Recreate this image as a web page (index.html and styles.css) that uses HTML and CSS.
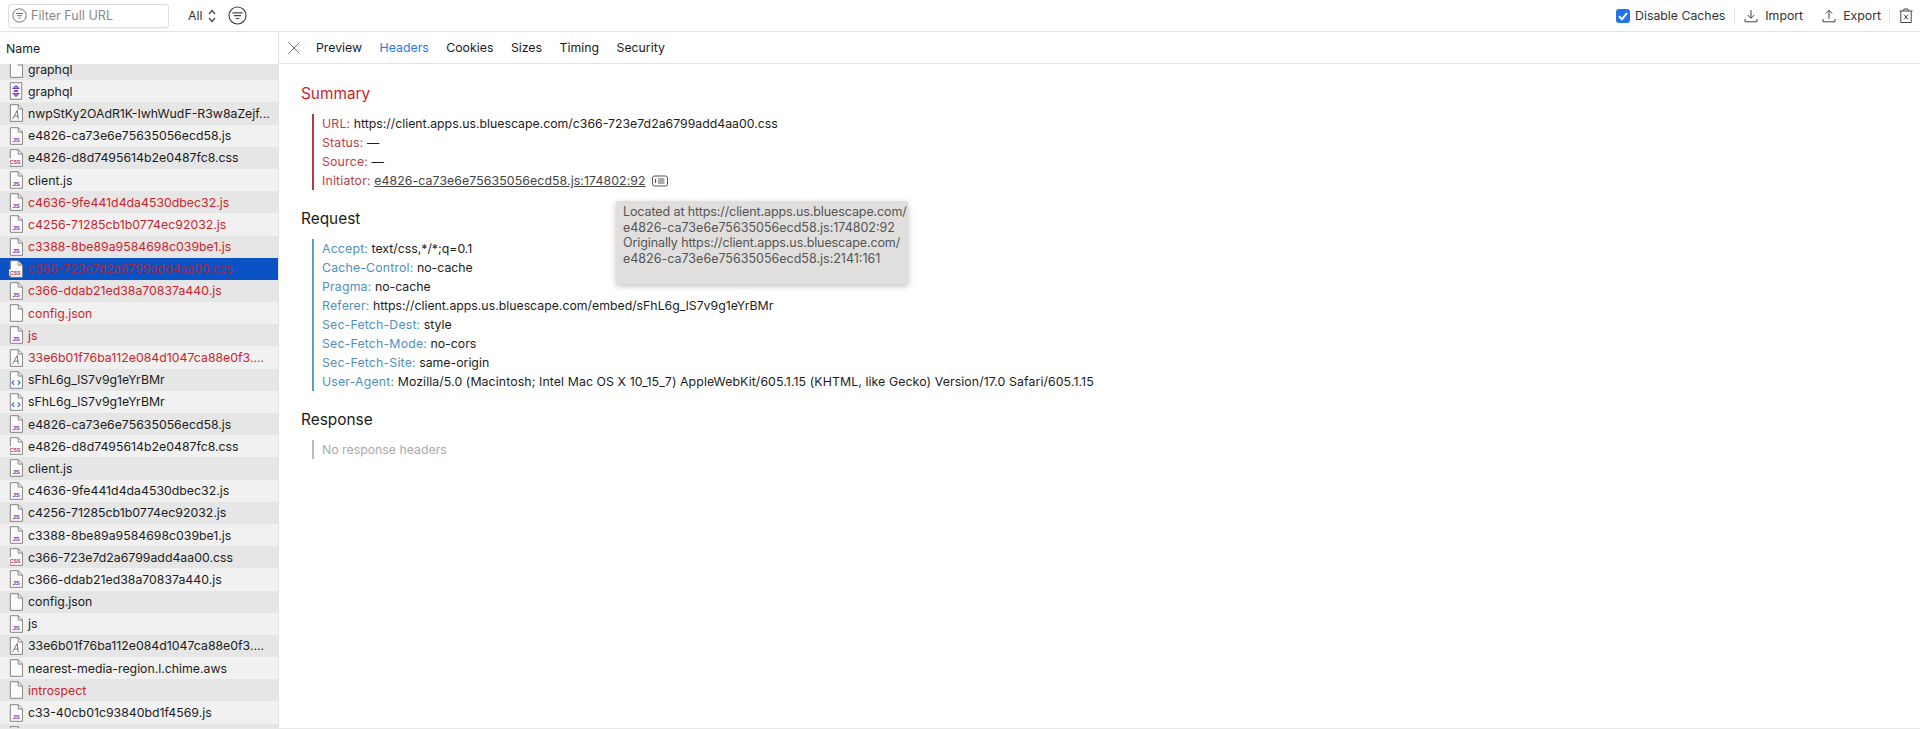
FILE: index.html
```html
<!DOCTYPE html>
<html lang="en">
<head>
<meta charset="utf-8">
<title>Network</title>
<link rel="stylesheet" href="styles.css">
</head>
<body>
<svg class="defs" aria-hidden="true">
  <symbol id="doc" viewBox="0 0 16 20"><path d="M1.5.5h9l5 5v14h-14z" fill="#fbfbfb" stroke="#777"/><path d="M10.5.5v5h5" fill="none" stroke="#777"/></symbol>
  <symbol id="js" viewBox="0 0 16 20"><path d="M1.5.5h9l5 5v14h-14z" fill="#fbfbfb" stroke="#777"/><path d="M10.5.5v5h5" fill="none" stroke="#777"/><text x="8.2" y="16.5" class="gl gl-js">JS</text></symbol>
  <symbol id="css" viewBox="0 0 16 20"><path d="M1.5.5h9l5 5v14h-14z" fill="#fbfbfb" stroke="#777"/><path d="M10.5.5v5h5" fill="none" stroke="#777"/><rect x="0" y="10.5" width="14" height="7" fill="#fbfbfb"/><text x="7" y="16.5" class="gl gl-css">CSS</text></symbol>
  <symbol id="font" viewBox="0 0 16 20"><path d="M1.5.5h9l5 5v14h-14z" fill="#fbfbfb" stroke="#777"/><path d="M10.5.5v5h5" fill="none" stroke="#777"/><path d="M4 17l5.5-10 1 10M6 13.500h4.500" fill="none" stroke="#667" stroke-width="1"/></symbol>
  <symbol id="html" viewBox="0 0 16 20"><path d="M1.500.5h9l5 5v14h-14z" fill="#fbfbfb" stroke="#777"/><path d="M10.5.5v5h5" fill="none" stroke="#777"/><path d="M6 10.500l-2.500 2.500 2.500 2.500M10 10.500l2.500 2.500-2.500 2.500" fill="none" stroke="#2f6fd0" stroke-width="1.300"/></symbol>
  <symbol id="gql" viewBox="0 0 16 20"><path d="M1.500.5h13v19h-13z" fill="#fbfbfb" stroke="#777"/><path d="M8 4l3 3H5zM8 16l3-3H5z" fill="none" stroke="#6a3fd0" stroke-width="1.300"/><path d="M5.500 9h5v2h-5z" fill="#6a3fd0"/></symbol>
</svg>

<header class="toolbar">
  <label class="filter">
    <svg class="filter-ic" width="15" height="15" viewBox="0 0 15 15"><circle cx="7.500" cy="7.500" r="6.700" fill="none" stroke="#777"/><path d="M4 5.500h7M5 7.700h5M6.300 10h2.400" stroke="#777" fill="none"/></svg>
    <span class="filter-text">Filter Full URL</span>
  </label>
  <span class="all">All</span>
  <svg class="updown" width="8" height="14" viewBox="0 0 8 14"><path d="M1 5l3-3.500L7 5M1 9l3 3.500L7 9" fill="none" stroke="#444" stroke-width="1.200"/></svg>
  <svg class="circle-filter" width="19" height="19" viewBox="0 0 19 19"><circle cx="9.500" cy="9.500" r="8.500" fill="none" stroke="#444" stroke-width="1.200"/><path d="M4.500 6.800h10M6 9.700h7M7.700 12.500h3.600" stroke="#444" stroke-width="1.200" fill="none"/></svg>
  <div class="tool-right">
    <span class="check"><svg width="14" height="14" viewBox="0 0 14 14"><path d="M3 7.300l3 3 5-6.300" fill="none" stroke="#fff" stroke-width="2"/></svg></span>
    <span class="tool-label caches">Disable Caches</span>
    <span class="divider"></span>
    <button class="tool-btn import">
      <svg width="14" height="14" viewBox="0 0 14 14"><path d="M7 1v8M3.800 6L7 9.300 10.200 6M1 10v2.800h12V10" fill="none" stroke="#444"/></svg>
      <span class="tool-label">Import</span>
    </button>
    <button class="tool-btn export">
      <svg width="14" height="14" viewBox="0 0 14 14"><path d="M7 10V1.500M3.800 4.500L7 1.200l3.200 3.300M1 10v2.800h12V10" fill="none" stroke="#444"/></svg>
      <span class="tool-label">Export</span>
    </button>
    <span class="divider last"></span>
    <svg class="trash" width="14" height="15" viewBox="0 0 14 15"><path d="M.5 3h13M4.500 3l.5-2h4l.5 2M1.800 3v11.500h10.400V3M5 6.500l4 5M9 6.500l-4 5" fill="none" stroke="#444"/></svg>
  </div>
</header>

<main class="panes">
  <aside class="sidebar">
    <div class="side-head">Name</div>
    <ul class="rows">
      <li class="row"><svg class="ic"><use href="#doc"/></svg><span class="nm">graphql</span></li>
      <li class="row"><svg class="ic"><use href="#gql"/></svg><span class="nm">graphql</span></li>
      <li class="row"><svg class="ic"><use href="#font"/></svg><span class="nm">nwpStKy2OAdR1K-IwhWudF-R3w8aZejf...</span></li>
      <li class="row"><svg class="ic"><use href="#js"/></svg><span class="nm">e4826-ca73e6e75635056ecd58.js</span></li>
      <li class="row"><svg class="ic"><use href="#css"/></svg><span class="nm">e4826-d8d7495614b2e0487fc8.css</span></li>
      <li class="row"><svg class="ic"><use href="#js"/></svg><span class="nm">client.js</span></li>
      <li class="row err"><svg class="ic"><use href="#js"/></svg><span class="nm">c4636-9fe441d4da4530dbec32.js</span></li>
      <li class="row err"><svg class="ic"><use href="#js"/></svg><span class="nm">c4256-71285cb1b0774ec92032.js</span></li>
      <li class="row err"><svg class="ic"><use href="#js"/></svg><span class="nm">c3388-8be89a9584698c039be1.js</span></li>
      <li class="row err sel"><svg class="ic"><use href="#css"/></svg><span class="nm">c366-723e7d2a6799add4aa00.css</span></li>
      <li class="row err"><svg class="ic"><use href="#js"/></svg><span class="nm">c366-ddab21ed38a70837a440.js</span></li>
      <li class="row err"><svg class="ic"><use href="#doc"/></svg><span class="nm">config.json</span></li>
      <li class="row err"><svg class="ic"><use href="#js"/></svg><span class="nm">js</span></li>
      <li class="row err"><svg class="ic"><use href="#font"/></svg><span class="nm">33e6b01f76ba112e084d1047ca88e0f3....</span></li>
      <li class="row"><svg class="ic"><use href="#html"/></svg><span class="nm">sFhL6g_lS7v9g1eYrBMr</span></li>
      <li class="row"><svg class="ic"><use href="#html"/></svg><span class="nm">sFhL6g_lS7v9g1eYrBMr</span></li>
      <li class="row"><svg class="ic"><use href="#js"/></svg><span class="nm">e4826-ca73e6e75635056ecd58.js</span></li>
      <li class="row"><svg class="ic"><use href="#css"/></svg><span class="nm">e4826-d8d7495614b2e0487fc8.css</span></li>
      <li class="row"><svg class="ic"><use href="#js"/></svg><span class="nm">client.js</span></li>
      <li class="row"><svg class="ic"><use href="#js"/></svg><span class="nm">c4636-9fe441d4da4530dbec32.js</span></li>
      <li class="row"><svg class="ic"><use href="#js"/></svg><span class="nm">c4256-71285cb1b0774ec92032.js</span></li>
      <li class="row"><svg class="ic"><use href="#js"/></svg><span class="nm">c3388-8be89a9584698c039be1.js</span></li>
      <li class="row"><svg class="ic"><use href="#css"/></svg><span class="nm">c366-723e7d2a6799add4aa00.css</span></li>
      <li class="row"><svg class="ic"><use href="#js"/></svg><span class="nm">c366-ddab21ed38a70837a440.js</span></li>
      <li class="row"><svg class="ic"><use href="#doc"/></svg><span class="nm">config.json</span></li>
      <li class="row"><svg class="ic"><use href="#js"/></svg><span class="nm">js</span></li>
      <li class="row"><svg class="ic"><use href="#font"/></svg><span class="nm">33e6b01f76ba112e084d1047ca88e0f3....</span></li>
      <li class="row"><svg class="ic"><use href="#doc"/></svg><span class="nm">nearest-media-region.l.chime.aws</span></li>
      <li class="row err"><svg class="ic"><use href="#doc"/></svg><span class="nm">introspect</span></li>
      <li class="row"><svg class="ic"><use href="#js"/></svg><span class="nm">c33-40cb01c93840bd1f4569.js</span></li>
      <li class="row"><svg class="ic"><use href="#doc"/></svg></li>
    </ul>
  </aside>

  <section class="detail">
    <nav class="tabs">
      <svg class="close" width="12" height="12" viewBox="0 0 12 12"><path d="M.5.500l11 11M11.500.5l-11 11" stroke="#777" fill="none"/></svg>
      <span class="tab">Preview</span>
      <span class="tab active">Headers</span>
      <span class="tab">Cookies</span>
      <span class="tab">Sizes</span>
      <span class="tab">Timing</span>
      <span class="tab">Security</span>
    </nav>
    <div class="content">
      <h2 class="sec-title red">Summary</h2>
      <dl class="group g-red">
        <div class="kv"><dt>URL:</dt> <dd>https://client.apps.us.bluescape.com/c366-723e7d2a6799add4aa00.css</dd></div>
        <div class="kv"><dt>Status:</dt> <dd>—</dd></div>
        <div class="kv"><dt>Source:</dt> <dd>—</dd></div>
        <div class="kv"><dt>Initiator:</dt> <dd><u class="link">e4826-ca73e6e75635056ecd58.js:174802:92</u>
          <svg class="stack" width="16" height="12" viewBox="0 0 16 12"><rect x=".5" y="1" width="15" height="10" rx="2" fill="none" stroke="#555"/><path d="M3.500 4v4" stroke="#555" stroke-width="1.300"/><path d="M6 4h6.500M6 6h6.500M6 8h6.500" stroke="#555"/></svg></dd></div>
      </dl>
      <h2 class="sec-title">Request</h2>
      <dl class="group g-blue">
        <div class="kv"><dt>Accept:</dt> <dd>text/css,*/*;q=0.1</dd></div>
        <div class="kv"><dt>Cache-Control:</dt> <dd>no-cache</dd></div>
        <div class="kv"><dt>Pragma:</dt> <dd>no-cache</dd></div>
        <div class="kv"><dt>Referer:</dt> <dd>https://client.apps.us.bluescape.com/embed/sFhL6g_lS7v9g1eYrBMr</dd></div>
        <div class="kv"><dt>Sec-Fetch-Dest:</dt> <dd>style</dd></div>
        <div class="kv"><dt>Sec-Fetch-Mode:</dt> <dd>no-cors</dd></div>
        <div class="kv"><dt>Sec-Fetch-Site:</dt> <dd>same-origin</dd></div>
        <div class="kv"><dt>User-Agent:</dt> <dd class="ua">Mozilla/5.0 (Macintosh; Intel Mac OS X 10_15_7) AppleWebKit/605.1.15 (KHTML, like Gecko) Version/17.0 Safari/605.1.15</dd></div>
      </dl>
      <h2 class="sec-title">Response</h2>
      <div class="group g-gray"><div class="kv none">No response headers</div></div>
      <div class="tooltip"><span class="tt-url">Located at https://client.apps.us.bluescape.com/</span><br>e4826-ca73e6e75635056ecd58.js:174802:92<br><span class="tt-url">Originally https://client.apps.us.bluescape.com/</span><br>e4826-ca73e6e75635056ecd58.js:2141:161</div>
    </div>
  </section>
</main>
</body>
</html>
```
FILE: styles.css
```css
* { box-sizing: border-box; }
html, body { margin: 0; }
html { overflow: hidden; }
body {
  height: 729px;
  overflow: hidden;
  display: flex;
  flex-direction: column;
  font-family: Inter, "Liberation Sans", sans-serif;
  font-size: 12.3px;
  color: #1c1c1c;
  background: #fff;
}
.defs { display: none; }
.gl { font-family: "Liberation Sans", sans-serif; font-weight: 700; text-anchor: middle; }
.gl-js { font-size: 7px; fill: #5a3fc0; }
.gl-css { font-size: 6px; fill: #b33a3a; }

.toolbar {
  height: 32px;
  flex: none;
  display: flex;
  align-items: center;
  padding: 0 7px 0 8px;
  border-bottom: 1px solid #e2e2e2;
}
.filter {
  width: 161px;
  height: 24px;
  display: flex;
  align-items: center;
  gap: 4px;
  padding-left: 3px;
  border: 1px solid #ddd;
  border-radius: 3px;
  box-shadow: 0 1px 1px rgba(0,0,0,.05);
}
.filter-text { color: #8a8a8a; font-size: 12.6px; }
.all { margin-left: 19px; color: #333; }
.updown { margin-left: 6px; }
.circle-filter { margin-left: 12px; }
.tool-right { margin-left: auto; display: flex; align-items: center; }
.check {
  width: 14px; height: 14px;
  display: flex;
  background: #1f75ea;
  border-radius: 3px;
}
.tool-label { color: #333; }
.caches { margin-left: 5px; }
.divider { width: 1px; height: 15px; background: #e4e4e4; margin: 0 9px; }
.tool-btn {
  display: flex;
  align-items: center;
  gap: 7px;
  border: 0;
  padding: 0;
  background: none;
  font: inherit;
}
.export { margin-left: 19px; }
.divider.last { margin: 0 9px 0 8px; }

.panes { flex: 1; min-height: 0; display: flex; border-bottom: 1px solid #e8e8e8; }
.sidebar {
  width: 279px;
  flex: none;
  display: flex;
  flex-direction: column;
  border-right: 1px solid #e2e2e2;
  overflow: hidden;
}
.side-head {
  height: 32px;
  flex: none;
  display: flex;
  align-items: center;
  padding-left: 6px;
  background: #fff;
  position: relative;
  z-index: 1;
}
.rows { list-style: none; margin: -6px 0 0; padding: 0; }
.row {
  height: 22.2px;
  display: flex;
  align-items: center;
  gap: 5px;
  padding-left: 9px;
  white-space: nowrap;
  background: #f1f1f1;
}
.row:nth-child(odd) { background: #e6e6e6; }
.row.err { color: #cc1f2a; }
.row.sel { background: #0a52c4; color: #a52a45; }
.ic { width: 14px; height: 18px; flex: none; }

.detail { flex: 1; min-width: 0; display: flex; flex-direction: column; }
.tabs {
  height: 32px;
  flex: none;
  display: flex;
  align-items: center;
  padding-left: 9px;
  border-bottom: 1px solid #e2e2e2;
}
.close { margin-right: 16px; }
.tab { margin-right: 17.500px; }
.tab.active { color: #1f7ae0; }

.content { position: relative; padding: 20px 0 0 22px; flex: 1; }
.sec-title { margin: 0; font-size: 15.4px; line-height: 20px; font-weight: 400; }
.sec-title.red { color: #cc1f2a; }
.group { margin: 10px 0 19px 11px; padding-left: 8px; border-left: 2px solid; }
.g-red { border-color: #c0383f; }
.g-red dt { color: #b8404a; }
.g-blue { border-color: #5a9bd0; }
.g-blue dt { color: #4f90c0; }
.g-gray { border-color: #bbb; }
.kv { line-height: 19px; white-space: nowrap; }
.kv dt, .kv dd { display: inline; margin: 0; }
.kv dt { letter-spacing: .18px; }
.kv dd.ua { letter-spacing: .1px; }
.kv.none { color: #aaa; }
.link { color: #444; letter-spacing: .1px; }
.stack { vertical-align: -2px; margin-left: 3px; }
.tooltip {
  position: absolute;
  left: 337px;
  top: 137px;
  width: 292px;
  height: 83px;
  padding: 3px 7px;
  font-size: 12.5px;
  line-height: 15.6px;
  background: #e0dfdd;
  color: #555;
  box-shadow: 0 2px 6px rgba(0,0,0,.25);
  white-space: nowrap;
}
.tt-url { letter-spacing: -.1px; }
```
